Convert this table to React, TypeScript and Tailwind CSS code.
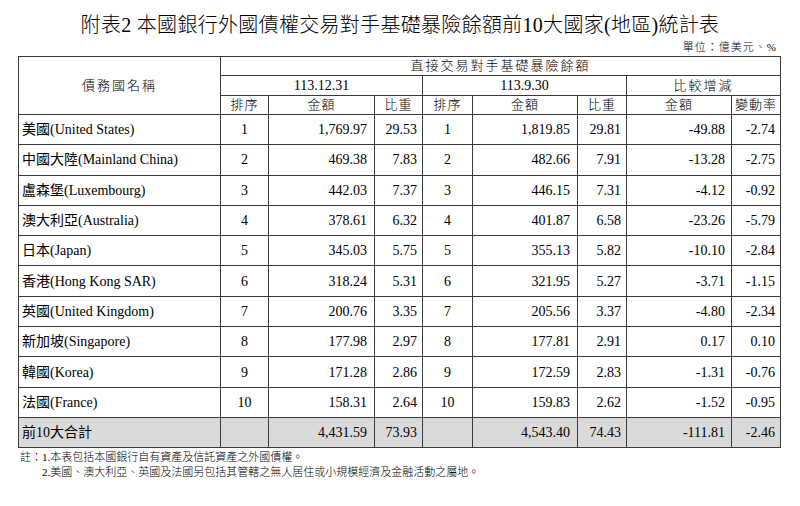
import React from "react";

const rows: [string, string, string, string, string, string, string, string, string][] = [
  ["美國(United States)", "1", "1,769.97", "29.53", "1", "1,819.85", "29.81", "-49.88", "-2.74"],
  ["中國大陸(Mainland China)", "2", "469.38", "7.83", "2", "482.66", "7.91", "-13.28", "-2.75"],
  ["盧森堡(Luxembourg)", "3", "442.03", "7.37", "3", "446.15", "7.31", "-4.12", "-0.92"],
  ["澳大利亞(Australia)", "4", "378.61", "6.32", "4", "401.87", "6.58", "-23.26", "-5.79"],
  ["日本(Japan)", "5", "345.03", "5.75", "5", "355.13", "5.82", "-10.10", "-2.84"],
  ["香港(Hong Kong SAR)", "6", "318.24", "5.31", "6", "321.95", "5.27", "-3.71", "-1.15"],
  ["英國(United Kingdom)", "7", "200.76", "3.35", "7", "205.56", "3.37", "-4.80", "-2.34"],
  ["新加坡(Singapore)", "8", "177.98", "2.97", "8", "177.81", "2.91", "0.17", "0.10"],
  ["韓國(Korea)", "9", "171.28", "2.86", "9", "172.59", "2.83", "-1.31", "-0.76"],
  ["法國(France)", "10", "158.31", "2.64", "10", "159.83", "2.62", "-1.52", "-0.95"],
];

const total = ["前10大合計", "", "4,431.59", "73.93", "", "4,543.40", "74.43", "-111.81", "-2.46"];

const widths = [202, 48, 106, 48, 50, 105, 49, 105, 49];

const bd = "border border-[#3a3a3a]";
const hd = `${bd} text-center align-middle font-light text-[13px] tracking-[1px] p-0`;

function DataRow({ r, gray }: { r: string[]; gray?: boolean }) {
  const bg = gray ? "bg-[#dadada]" : "";
  return (
    <tr className="h-[30.3px]">
      <td className={`${bd} ${bg} pl-[3px] text-left text-[14px] whitespace-nowrap`}>{r[0]}</td>
      <td className={`${bd} ${bg} text-center text-[14px]`}>{r[1]}</td>
      <td className={`${bd} ${bg} text-right pr-[7px] text-[14px]`}>{r[2]}</td>
      <td className={`${bd} ${bg} text-right pr-[5px] text-[14px]`}>{r[3]}</td>
      <td className={`${bd} ${bg} text-center text-[14px]`}>{r[4]}</td>
      <td className={`${bd} ${bg} text-right pr-[7px] text-[14px]`}>{r[5]}</td>
      <td className={`${bd} ${bg} text-right pr-[5px] text-[14px]`}>{r[6]}</td>
      <td className={`${bd} ${bg} text-right pr-[6px] text-[14px]`}>{r[7]}</td>
      <td className={`${bd} ${bg} text-right pr-[5px] text-[14px]`}>{r[8]}</td>
    </tr>
  );
}

export default function App() {
  return (
    <div
      className="w-[800px] h-[506px] bg-white text-black overflow-hidden"
      style={{ fontFamily: '"Liberation Serif", "Noto Sans CJK TC", serif' }}
    >
      <div className="pt-[11px] text-center text-[20px] leading-[28px] tracking-[0.3px] font-light">
        附表2 本國銀行外國債權交易對手基礎暴險餘額前10大國家(地區)統計表
      </div>
      <div className="pr-[23px] text-right text-[11px] leading-[17px] tracking-[1px] font-light">單位：億美元、%</div>
      <div className="pl-[18px]">
        <table className="border-collapse table-fixed w-[762px] border-[1.5px] border-[#3a3a3a]">
          <colgroup>
            {widths.map((w, i) => (
              <col key={i} style={{ width: w }} />
            ))}
          </colgroup>
          <thead>
            <tr className="h-[19px]">
              <th rowSpan={3} className={`${hd} tracking-[2px]`}>債務國名稱</th>
              <th colSpan={8} className={`${hd} tracking-[2px] leading-[18px]`}>直接交易對手基礎暴險餘額</th>
            </tr>
            <tr className="h-[20px]">
              <th colSpan={3} className={`${hd} text-[14px] tracking-normal leading-[19px]`}>113.12.31</th>
              <th colSpan={3} className={`${hd} text-[14px] tracking-normal leading-[19px]`}>113.9.30</th>
              <th colSpan={2} className={`${hd} tracking-[2px] leading-[19px]`}>比較增減</th>
            </tr>
            <tr className="h-[19px]">
              {["排序", "金額", "比重", "排序", "金額", "比重", "金額", "變動率"].map((t, i) => (
                <th key={i} className={`${hd} leading-[18px]`}>{t}</th>
              ))}
            </tr>
          </thead>
          <tbody>
            {rows.map((r, i) => (
              <DataRow key={i} r={r} />
            ))}
            <DataRow r={total} gray />
          </tbody>
        </table>
      </div>
      <div className="pl-[20px] pt-[2px] text-[11px] leading-[15px] font-light">
        <div>註：1.本表包括本國銀行自有資產及信託資產之外國債權。</div>
        <div className="pl-[22px]">2.美國、澳大利亞、英國及法國另包括其管轄之無人居住或小規模經濟及金融活動之屬地。</div>
      </div>
    </div>
  );
}
